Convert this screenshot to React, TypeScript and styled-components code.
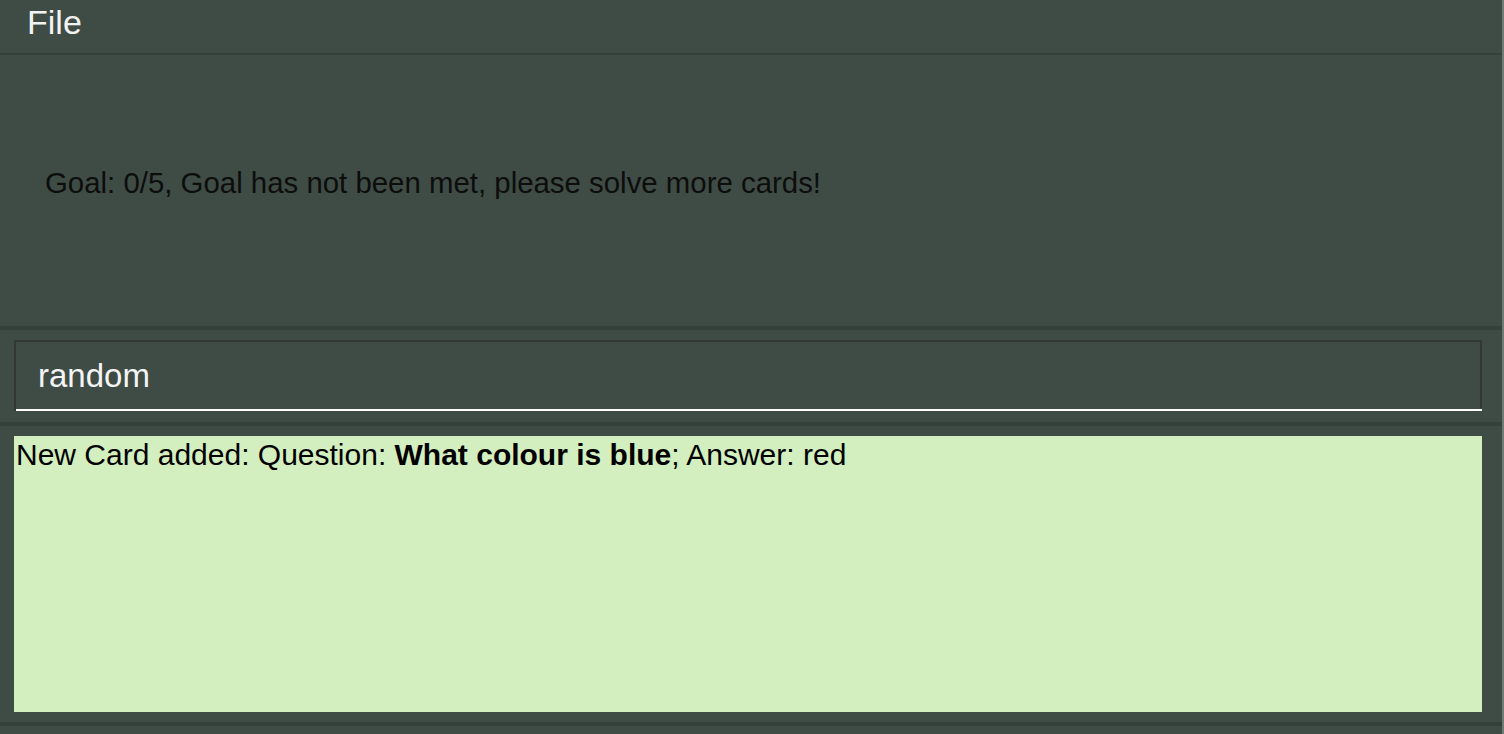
import styled, { createGlobalStyle } from 'styled-components';

const GlobalStyle = createGlobalStyle`
  html, body {
    margin: 0;
    padding: 0;
    background: #3e4c45;
  }
  * {
    box-sizing: border-box;
  }
`;

const Window = styled.div`
  width: 1504px;
  height: 734px;
  background: #3e4c45;
  border-right: 2px solid #6f7b74;
  display: flex;
  flex-direction: column;
  font-family: "Liberation Sans", Arial, sans-serif;
  overflow: hidden;
`;

const MenuBar = styled.div`
  height: 55px;
  display: flex;
  align-items: flex-start;
  padding-left: 27px;
  border-bottom: 2px solid #34403a;
`;

const MenuItem = styled.span`
  color: #f2f2f2;
  font-size: 34px;
  line-height: 45px;
`;

interface SectionProps {
  height: number;
}

const Section = styled.div<SectionProps>`
  height: ${({ height }) => height}px;
  border-bottom: 4px solid #34403a;
  padding: 10px 20px 10px 14px;
  display: flex;
  flex-direction: column;
`;

const GoalPanel = styled(Section)`
  justify-content: center;
  padding: 0 0 16px 45px;

  p {
    margin: 0;
    color: #0d0d0d;
    font-size: 29.4px;
  }
`;

const CommandBox = styled.div`
  height: 71px;
  border-left: 2px solid #333735;
  display: flex;
  flex-direction: column;
`;

const CommandField = styled.div`
  flex: 1;
  display: flex;
  align-items: center;
  padding-left: 22px;
  border-top: 2px solid #333735;
  border-right: 2px solid #333735;
  color: #f4f4f4;
  font-size: 33px;
`;

const Underline = styled.div`
  height: 2px;
  background: #ffffff;
`;

const ResultBox = styled.div`
  flex: 1;
  background: #d3eebf;
  color: #000;
  font-size: 30px;
  line-height: 38px;
  padding: 0 2px;

  b {
    font-weight: bold;
  }
`;

const App = () => {
  return (
    <>
      <GlobalStyle />
      <Window>
        <MenuBar>
          <MenuItem>File</MenuItem>
        </MenuBar>

        <GoalPanel height={275}>
          <p>Goal: 0/5, Goal has not been met, please solve more cards!</p>
        </GoalPanel>

        <Section height={96}>
          <CommandBox>
            <CommandField>random</CommandField>
            <Underline />
          </CommandBox>
        </Section>

        <Section height={300}>
          <ResultBox>
            New Card added: Question: <b>What colour is blue</b>; Answer: red
          </ResultBox>
        </Section>
      </Window>
    </>
  );
};

export default App;
